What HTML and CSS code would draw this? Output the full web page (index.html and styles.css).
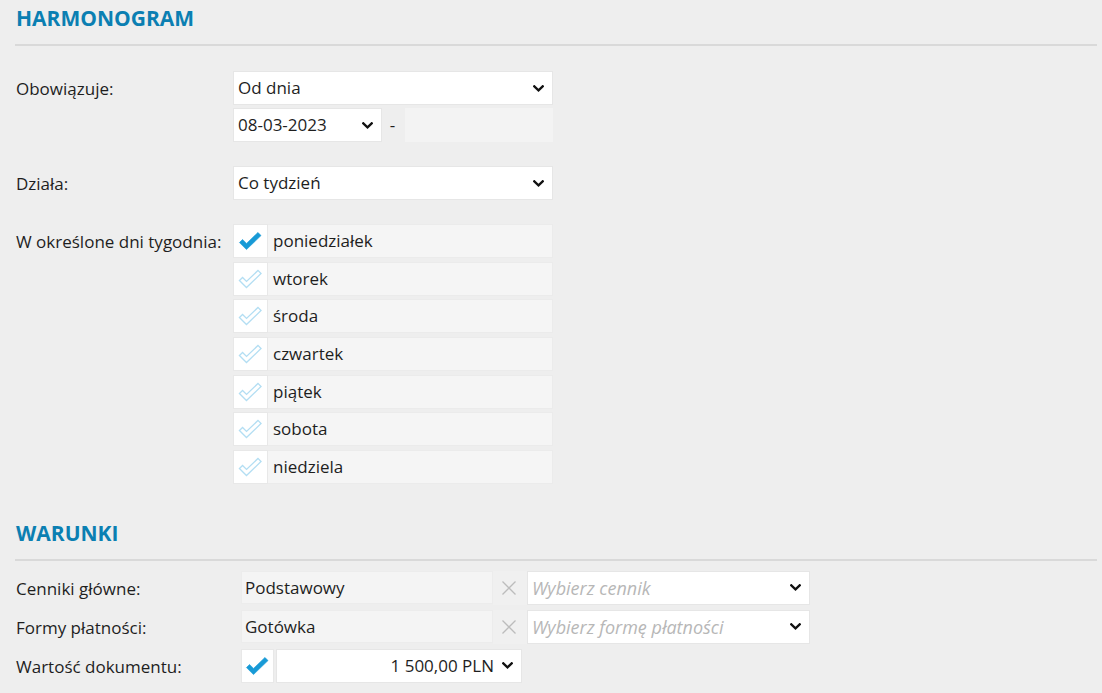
FILE: index.html
```html
<!DOCTYPE html>
<html lang="pl">
<head>
<meta charset="utf-8">
<title>Harmonogram</title>
<link rel="stylesheet" href="styles.css">
</head>
<body>
<div class="page">
  <section class="sec sec-1">
    <h2 class="sec-title">HARMONOGRAM</h2>
    <div class="form">
      <div class="row">
        <div class="label">Obowiązuje:</div>
        <div class="stack">
          <div class="select w-main"><span class="val">Od dnia</span><svg class="chev" viewBox="0 0 11 7" width="11" height="7"><polyline points="1.3,1.3 5.5,5.3 9.7,1.3"/></svg></div>
          <div class="date-row">
            <div class="select w-date"><span class="val">08-03-2023</span><svg class="chev" viewBox="0 0 11 7" width="11" height="7"><polyline points="1.3,1.3 5.5,5.3 9.7,1.3"/></svg></div>
            <span class="dash">-</span>
            <div class="input-empty"></div>
          </div>
        </div>
      </div>
      <div class="row">
        <div class="label">Działa:</div>
        <div class="stack">
          <div class="select w-main"><span class="val">Co tydzień</span><svg class="chev" viewBox="0 0 11 7" width="11" height="7"><polyline points="1.3,1.3 5.5,5.3 9.7,1.3"/></svg></div>
        </div>
      </div>
      <div class="row">
        <div class="label">W określone dni tygodnia:</div>
        <div class="days">
          <div class="day"><div class="cb"><svg class="chk on" viewBox="0 0 25 20" width="25" height="20"><polygon points="1.44,11.56 8.47,18.58 23.03,4.59 19.97,1.41 8.53,12.42 4.56,8.44"/></svg></div><div class="day-name">poniedziałek</div></div>
          <div class="day"><div class="cb"><svg class="chk off" viewBox="0 0 25 20" width="25" height="20"><polygon points="1.44,11.56 8.47,18.58 23.03,4.59 19.97,1.41 8.53,12.42 4.56,8.44"/></svg></div><div class="day-name">wtorek</div></div>
          <div class="day"><div class="cb"><svg class="chk off" viewBox="0 0 25 20" width="25" height="20"><polygon points="1.44,11.56 8.47,18.58 23.03,4.59 19.97,1.41 8.53,12.42 4.56,8.44"/></svg></div><div class="day-name">środa</div></div>
          <div class="day"><div class="cb"><svg class="chk off" viewBox="0 0 25 20" width="25" height="20"><polygon points="1.44,11.56 8.47,18.58 23.03,4.59 19.97,1.41 8.53,12.42 4.56,8.44"/></svg></div><div class="day-name">czwartek</div></div>
          <div class="day"><div class="cb"><svg class="chk off" viewBox="0 0 25 20" width="25" height="20"><polygon points="1.44,11.56 8.47,18.58 23.03,4.59 19.97,1.41 8.53,12.42 4.56,8.44"/></svg></div><div class="day-name">piątek</div></div>
          <div class="day"><div class="cb"><svg class="chk off" viewBox="0 0 25 20" width="25" height="20"><polygon points="1.44,11.56 8.47,18.58 23.03,4.59 19.97,1.41 8.53,12.42 4.56,8.44"/></svg></div><div class="day-name">sobota</div></div>
          <div class="day"><div class="cb"><svg class="chk off" viewBox="0 0 25 20" width="25" height="20"><polygon points="1.44,11.56 8.47,18.58 23.03,4.59 19.97,1.41 8.53,12.42 4.56,8.44"/></svg></div><div class="day-name">niedziela</div></div>
        </div>
      </div>
    </div>
  </section>

  <section class="sec sec-2">
    <h2 class="sec-title">WARUNKI</h2>
    <div class="form form-2">
      <div class="row2">
        <div class="label label-2">Cenniki główne:</div>
        <div class="chosen">Podstawowy</div>
        <div class="xbtn"><svg viewBox="0 0 16 16" width="16" height="16"><path d="M1.5 1.5 L14.5 14.5 M14.5 1.5 L1.5 14.5"/></svg></div>
        <div class="select w-pick"><span class="ph">Wybierz cennik</span><svg class="chev" viewBox="0 0 11 7" width="11" height="7"><polyline points="1.3,1.3 5.5,5.3 9.7,1.3"/></svg></div>
      </div>
      <div class="row2">
        <div class="label label-2">Formy płatności:</div>
        <div class="chosen">Gotówka</div>
        <div class="xbtn"><svg viewBox="0 0 16 16" width="16" height="16"><path d="M1.5 1.5 L14.5 14.5 M14.5 1.5 L1.5 14.5"/></svg></div>
        <div class="select w-pick"><span class="ph">Wybierz formę płatności</span><svg class="chev" viewBox="0 0 11 7" width="11" height="7"><polyline points="1.3,1.3 5.5,5.3 9.7,1.3"/></svg></div>
      </div>
      <div class="row2">
        <div class="label label-2">Wartość dokumentu:</div>
        <div class="cb cb-2"><svg class="chk on" viewBox="0 0 25 20" width="25" height="20"><polygon points="1.44,11.56 8.47,18.58 23.03,4.59 19.97,1.41 8.53,12.42 4.56,8.44"/></svg></div>
        <div class="select w-amount"><span class="val val-right">1 500,00 PLN</span><svg class="chev" viewBox="0 0 11 7" width="11" height="7"><polyline points="1.3,1.3 5.5,5.3 9.7,1.3"/></svg></div>
      </div>
    </div>
  </section>
</div>
</body>
</html>
```

FILE: styles.css
```css
* { box-sizing: border-box; }

html, body {
  margin: 0;
  padding: 0;
  background: #eeeeee;
}

body {
  font-family: "Open Sans", "Noto Sans", "Liberation Sans", sans-serif;
  font-size: 17px;
  color: #1e1e1e;
  width: 1102px;
  height: 693px;
  overflow: hidden;
}

.page {
  padding: 0 5px 0 15px;
}

.sec-title {
  margin: 0;
  padding: 6px 0 14px 1px;
  font-size: 21px;
  line-height: 24px;
  font-weight: 700;
  color: #0b7fb2;
  border-bottom: 2px solid #d9d9d9;
}

.sec-2 {
  margin-top: 31px;
}

.form {
  padding-left: 1px;
  margin-top: 25px;
  display: flex;
  flex-direction: column;
  gap: 24px;
}

.form-2 {
  margin-top: 10px;
  gap: 5px;
}

.row {
  display: flex;
  align-items: flex-start;
}

.label {
  width: 217px;
  flex: none;
  height: 34px;
  line-height: 35px;
  white-space: nowrap;
}

.label-2 {
  width: 225px;
}

.stack {
  display: flex;
  flex-direction: column;
  gap: 3px;
}

.select {
  height: 34px;
  background: #ffffff;
  border: 1px solid #e6e6e6;
  display: flex;
  align-items: center;
  padding: 0 8px 0 4px;
  line-height: 32px;
}

.select .val,
.select .ph {
  flex: 1;
  white-space: nowrap;
  overflow: hidden;
}

.val-right {
  text-align: right;
  padding-right: 8px;
}

.ph {
  color: #b7b7b7;
  font-style: italic;
  font-size: 18px;
}

.chev {
  flex: none;
  display: block;
}

.chev polyline {
  fill: none;
  stroke: #111111;
  stroke-width: 2.3;
  stroke-linecap: square;
}

.w-main { width: 320px; }
.w-date { width: 149px; }
.w-pick { width: 283px; }
.w-amount { width: 246px; margin-left: 2px; }

.date-row {
  display: flex;
  align-items: center;
}

.dash {
  width: 23px;
  text-align: center;
  line-height: 34px;
  padding-right: 2px;
}

.input-empty {
  width: 148px;
  height: 34px;
  background: #f3f3f3;
}

.days {
  display: flex;
  flex-direction: column;
  gap: 3.67px;
}

.day {
  display: flex;
  height: 34px;
}

.cb {
  width: 35px;
  height: 34px;
  background: #ffffff;
  border: 1px solid #e8e8e8;
  display: flex;
  align-items: center;
  justify-content: center;
  flex: none;
}

.cb-2 {
  width: 33px;
}

.day-name {
  width: 285px;
  background: #f5f5f5;
  border: 1px solid #ebebeb;
  border-left: none;
  line-height: 32px;
  padding-left: 5px;
}

.chk {
  display: block;
}

.chk.on polygon {
  fill: #189ad6;
  stroke: #189ad6;
  stroke-width: 0.6;
  stroke-linejoin: miter;
}

.chk.off polygon {
  fill: #ffffff;
  stroke: #b3def3;
  stroke-width: 1.3;
  stroke-linejoin: miter;
}

.row2 {
  display: flex;
  align-items: center;
  height: 34px;
}

.chosen {
  width: 252px;
  height: 33px;
  background: #f4f4f4;
  border: 1px solid #ececec;
  line-height: 31px;
  padding-left: 3px;
}

.xbtn {
  width: 34px;
  height: 34px;
  background: #f0f0f0;
  display: flex;
  align-items: center;
  justify-content: center;
  padding-right: 2px;
}

.xbtn path {
  fill: none;
  stroke: #bcbcbc;
  stroke-width: 1.3;
}
```
